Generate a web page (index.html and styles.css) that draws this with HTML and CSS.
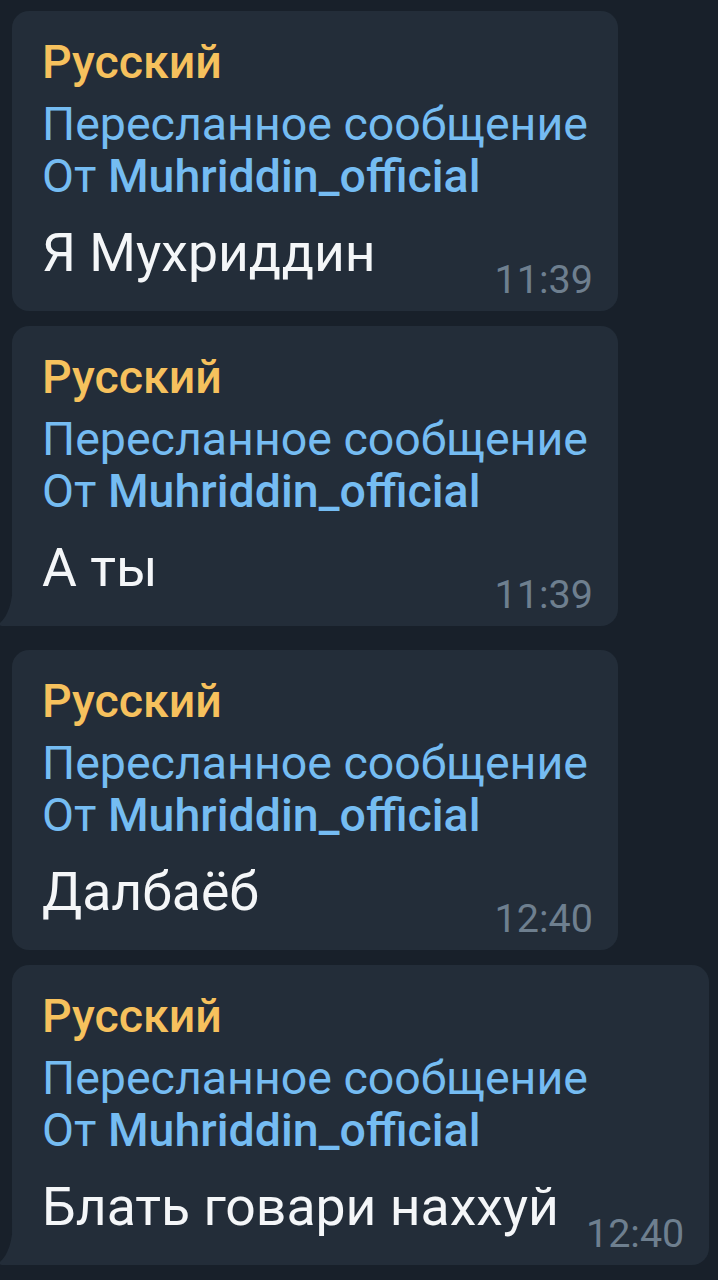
FILE: index.html
```html
<!DOCTYPE html>
<html lang="ru">
<head>
    <meta charset="UTF-8">
    <meta name="viewport" content="width=device-width, initial-scale=1.0">
    <title>Чат</title>
    <link rel="stylesheet" href="styles.css">
</head>
<body>
    <!-- Chat history -->
    <div class="chat">
        <div class="bubble">
            <div class="author">Русский</div>
            <div class="fwd">Пересланное сообщение</div>
            <div class="fwd">От <b>Muhriddin_official</b></div>
            <div class="msg-row">
                <span class="msg-text">Я Мухриддин</span>
                <span class="msg-time">11:39</span>
            </div>
        </div>

        <div class="bubble tailed">
            <div class="author">Русский</div>
            <div class="fwd">Пересланное сообщение</div>
            <div class="fwd">От <b>Muhriddin_official</b></div>
            <div class="msg-row">
                <span class="msg-text">А ты</span>
                <span class="msg-time">11:39</span>
            </div>
            <svg class="tail" viewBox="0 0 14 46" width="14" height="46">
                <path d="M14 0 C14 22 9 36 1 43 Q0 46 3 46 L14 46 Z"/>
            </svg>
        </div>

        <div class="bubble group-start">
            <div class="author">Русский</div>
            <div class="fwd">Пересланное сообщение</div>
            <div class="fwd">От <b>Muhriddin_official</b></div>
            <div class="msg-row">
                <span class="msg-text">Далбаёб</span>
                <span class="msg-time">12:40</span>
            </div>
        </div>

        <div class="bubble tailed">
            <div class="author">Русский</div>
            <div class="fwd">Пересланное сообщение</div>
            <div class="fwd">От <b>Muhriddin_official</b></div>
            <div class="msg-row">
                <span class="msg-text">Блать говари наххуй</span>
                <span class="msg-time">12:40</span>
            </div>
            <svg class="tail" viewBox="0 0 14 46" width="14" height="46">
                <path d="M14 0 C14 22 9 36 1 43 Q0 46 3 46 L14 46 Z"/>
            </svg>
        </div>
    </div>
</body>
</html>
```

FILE: styles.css
```css
body {
    background-color: #18202a;
    color: #f4f6f8;
    font-family: 'Roboto', 'Noto Sans', sans-serif;
    margin: 0;
    height: 100vh;
    overflow: hidden;
}

.chat {
    display: flex;
    flex-direction: column;
    align-items: flex-start;
    gap: 15px;
    padding: 11px 0 0 12px;
}

.bubble {
    position: relative;
    background-color: #232d39;
    border-radius: 17px;
    padding: 25px 30px 8px 30px;
    height: 300px;
    box-sizing: border-box;
}

.bubble.group-start {
    margin-top: 9px;
}

.bubble.tailed {
    border-bottom-left-radius: 0;
}

.tail {
    position: absolute;
    left: -13px;
    bottom: 0;
    fill: #232d39;
}

.author {
    color: #f6c15d;
    font-size: 46.5px;
    font-weight: 500;
    line-height: 52px;
    margin-bottom: 10px;
}

.fwd {
    color: #75bcf2;
    font-size: 46.5px;
    line-height: 52px;
    white-space: nowrap;
}

.fwd b {
    font-weight: 500;
}

.msg-row {
    display: flex;
    align-items: flex-end;
    justify-content: space-between;
    gap: 27px;
    margin-top: 21px;
}

.msg-text {
    font-size: 53.5px;
    line-height: 60px;
    padding-bottom: 19px;
    white-space: nowrap;
}

.msg-time {
    color: #6e7f8f;
    font-size: 39.5px;
    line-height: 44px;
    margin-right: -5px;
}
```
